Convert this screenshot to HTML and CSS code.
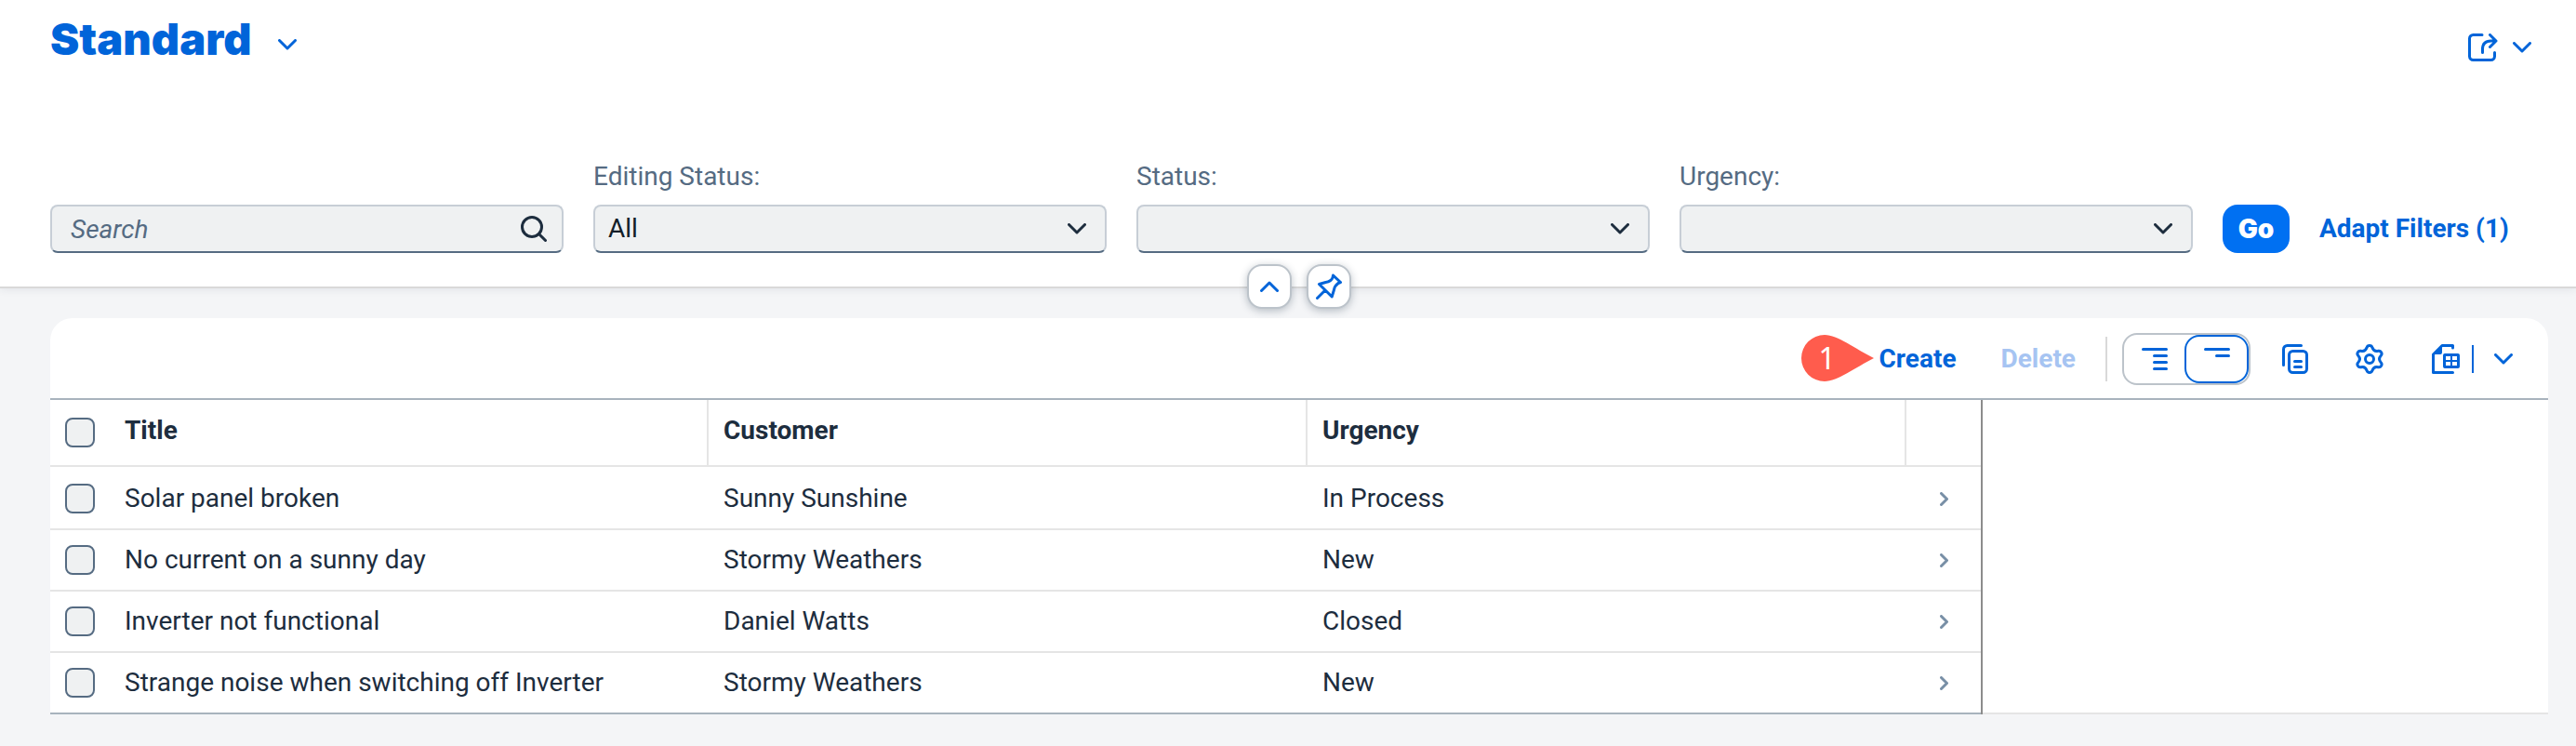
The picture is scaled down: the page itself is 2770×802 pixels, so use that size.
FILE: index.html
```html
<!DOCTYPE html>
<html lang="en">
<head>
<meta charset="utf-8">
<title>Incidents</title>
<link rel="stylesheet" href="styles.css">
</head>
<body>
<svg class="sprite" aria-hidden="true">
  <symbol id="chevron-down" viewBox="0 0 20 12"><path d="M1.5 1.5 10 10l8.500-8.500"/></symbol>
  <symbol id="chevron-up" viewBox="0 0 20 12"><path d="M1.500 10.500 10 2l8.500 8.500"/></symbol>
  <symbol id="chevron-right" viewBox="0 0 9 15"><path d="M1.500 1.500 7.500 7.500l-6 6"/></symbol>
</svg>

<header class="page-header">
  <div class="title-bar">
    <button class="variant" type="button">
      <h1 class="variant-title">Standard</h1>
      <svg class="icon chevron" aria-hidden="true"><use href="#chevron-down"/></svg>
    </button>
    <button class="share" type="button" aria-label="Share">
      <svg class="icon share-icon" viewBox="0 0 32 30" aria-hidden="true"><path d="M15 1.500H5.500a4 4 0 0 0-4 4v19a4 4 0 0 0 4 4h19a4 4 0 0 0 4-4v-4M15.500 20.500V17q0-9 9-9H30M23.500 1.500 30 8l-6.500 6.500"/></svg>
      <svg class="icon chevron" aria-hidden="true"><use href="#chevron-down"/></svg>
    </button>
  </div>

  <form class="filter-bar">
    <div class="field">
      <div class="control">
        <input class="input search" type="text" placeholder="Search" aria-label="Search">
        <svg class="icon control-icon search-icon" viewBox="0 0 28 28" aria-hidden="true"><circle cx="12" cy="12" r="10.500"/><path d="m19.500 19.500 7 7"/></svg>
      </div>
    </div>
    <div class="field">
      <label class="label" for="editing">Editing Status:</label>
      <div class="control">
        <select class="input" id="editing"><option>All</option></select>
        <svg class="icon control-icon chevron" aria-hidden="true"><use href="#chevron-down"/></svg>
      </div>
    </div>
    <div class="field">
      <label class="label" for="status">Status:</label>
      <div class="control">
        <select class="input" id="status"><option></option></select>
        <svg class="icon control-icon chevron" aria-hidden="true"><use href="#chevron-down"/></svg>
      </div>
    </div>
    <div class="field">
      <label class="label" for="urgency">Urgency:</label>
      <div class="control">
        <select class="input" id="urgency"><option></option></select>
        <svg class="icon control-icon chevron" aria-hidden="true"><use href="#chevron-down"/></svg>
      </div>
    </div>
    <div class="filter-actions">
      <button class="go" type="button">Go</button>
      <button class="text-button" type="button">Adapt Filters (1)</button>
    </div>
  </form>

  <div class="header-handles">
    <button class="handle" type="button" aria-label="Collapse header">
      <svg class="icon chevron" aria-hidden="true"><use href="#chevron-up"/></svg>
    </button>
    <button class="handle" type="button" aria-label="Pin header">
      <svg class="icon pin-icon" viewBox="0 0 28 28" aria-hidden="true"><path d="m18.500 2 8 7.500-2.500 1q-4 3-4.500 7L17.200 25 3.500 11.500l7-2q6-1 7.500-5ZM10 18l-8.500 8.500"/></svg>
    </button>
  </div>
</header>

<main class="content">
  <section class="card">
    <div class="toolbar">
      <div class="create-wrap">
        <button class="text-button action" type="button">Create</button>
        <div class="callout">
          <svg class="callout-shape" viewBox="0 0 78 50" aria-hidden="true"><path d="M25 0C39 0 58 15 78 25 58 35 39 50 25 50A25 25 0 0 1 25 0Z"/></svg>
          <span class="callout-number">1</span>
        </div>
      </div>
      <button class="text-button action" type="button" disabled>Delete</button>
      <span class="separator"></span>
      <div class="segments">
        <button class="segment" type="button" aria-label="Show more per row">
          <svg class="icon list-icon" viewBox="0 0 28 24" aria-hidden="true"><path d="M1.500 1.500h25M13.500 8.500h13M13.500 15.500h13M13.500 22.500h13"/></svg>
        </button>
        <button class="segment selected" type="button" aria-label="Show less per row">
          <svg class="icon list-icon" viewBox="0 0 28 24" aria-hidden="true"><path d="M1.500 1.500h25M13.500 8.500h13"/></svg>
        </button>
      </div>
      <button class="icon-button" type="button" aria-label="Copy">
        <svg class="icon copy-icon" viewBox="0 0 28 32" aria-hidden="true"><path d="M1.500 22.500V5.500a4 4 0 0 1 4-4h15M13.500 18.500h7M13.500 24.500h7"/><rect x="7.500" y="7.500" width="19" height="23" rx="4"/></svg>
      </button>
      <button class="icon-button" type="button" aria-label="Settings">
        <svg class="icon file-icon" viewBox="-15 -16 30 32" aria-hidden="true"><circle r="4.500"/><path d="M-3-12.200Q-2.400-14.500 0-14.500 2.400-14.500 3-12.200 4.500-7.800 9.100-8.700 11.400-9.300 12.600-7.200 13.800-5.200 12.100-3.500 9 0 12.100 3.500 13.800 5.200 12.600 7.200 11.400 9.300 9.100 8.700 4.500 7.800 3 12.200 2.400 14.500 0 14.500-2.400 14.500-3 12.200-4.500 7.800-9.100 8.700-11.400 9.300-12.600 7.200-13.800 5.200-12.100 3.500-9 0-12.100-3.500-13.800-5.200-12.600-7.200-11.400-9.300-9.100-8.700-4.500-7.800-3-12.200Z"/></svg>
      </button>
      <div class="split">
        <button class="icon-button export" type="button" aria-label="Export">
          <svg class="icon file-icon" viewBox="0 0 30 32" aria-hidden="true"><path d="M22.500 4V1.500H11L1.500 11v19.500h21"/><path class="solid" d="M11 1v8q0 2-2 2H1ZM14 10h14q2 0 2 2v12q0 2-2 2H14q-2 0-2-2V12q0-2 2-2Z"/><path class="cell" d="M15 13h5v4h-5zM22 13h5v4h-5zM15 19h5v4h-5zM22 19h5v4h-5z"/></svg>
        </button>
        <span class="split-line"></span>
        <button class="icon-button" type="button" aria-label="Export options">
          <svg class="icon chevron" aria-hidden="true"><use href="#chevron-down"/></svg>
        </button>
      </div>
    </div>

    <div class="table-area">
      <table class="table">
        <colgroup><col class="col-check"><col class="col-data"><col class="col-data"><col class="col-data"><col class="col-nav"></colgroup>
        <thead>
          <tr>
            <th class="check-cell"><input class="checkbox" type="checkbox" aria-label="Select all"></th>
            <th class="ruled">Title</th><th class="ruled">Customer</th><th class="ruled">Urgency</th><th class="nav-cell"></th>
          </tr>
        </thead>
        <tbody>
          <tr>
            <td class="check-cell"><input class="checkbox" type="checkbox" aria-label="Select Solar panel broken"></td>
            <td>Solar panel broken</td><td>Sunny Sunshine</td><td>In Process</td>
            <td class="nav-cell"><svg class="icon nav-icon" aria-hidden="true"><use href="#chevron-right"/></svg></td>
          </tr>
          <tr>
            <td class="check-cell"><input class="checkbox" type="checkbox" aria-label="Select No current on a sunny day"></td>
            <td>No current on a sunny day</td><td>Stormy Weathers</td><td>New</td>
            <td class="nav-cell"><svg class="icon nav-icon" aria-hidden="true"><use href="#chevron-right"/></svg></td>
          </tr>
          <tr>
            <td class="check-cell"><input class="checkbox" type="checkbox" aria-label="Select Inverter not functional"></td>
            <td>Inverter not functional</td><td>Daniel Watts</td><td>Closed</td>
            <td class="nav-cell"><svg class="icon nav-icon" aria-hidden="true"><use href="#chevron-right"/></svg></td>
          </tr>
          <tr>
            <td class="check-cell"><input class="checkbox" type="checkbox" aria-label="Select Strange noise when switching off Inverter"></td>
            <td>Strange noise when switching off Inverter</td><td>Stormy Weathers</td><td>New</td>
            <td class="nav-cell"><svg class="icon nav-icon" aria-hidden="true"><use href="#chevron-right"/></svg></td>
          </tr>
        </tbody>
      </table>
      <div class="table-rest"></div>
    </div>
  </section>
</main>
</body>
</html>
```

FILE: styles.css
```css
* { box-sizing: border-box; }

body {
  margin: 0;
  min-height: 100vh;
  background: #f4f5f7;
  color: #1d2d3e;
  font-family: Roboto, "Open Sans", sans-serif;
  font-size: 28px;
  line-height: 32px;
}

button, input, select { font: inherit; color: inherit; }

button {
  display: flex;
  align-items: center;
  justify-content: center;
  margin: 0;
  padding: 0;
  border: 0;
  background: none;
  color: #0064d9;
}

.sprite { display: none; }

.icon {
  display: block;
  flex: none;
  fill: none;
  stroke: currentColor;
  stroke-width: 3;
  stroke-linecap: round;
  stroke-linejoin: round;
}

.chevron { width: 20px; height: 12px; }
.share-icon { width: 32px; height: 30px; }
.pin-icon { width: 28px; height: 28px; }
.list-icon { width: 28px; height: 24px; }
.copy-icon { width: 28px; height: 32px; }
.file-icon { width: 30px; height: 32px; }
.nav-icon { width: 9px; height: 15px; color: #788fa6; }
.solid { fill: currentColor; stroke: none; }
.cell { fill: #fff; stroke: none; }

/* Page header */
.page-header {
  position: relative;
  padding: 14px 54px 36px;
  border-bottom: 2px solid #d9d9d9;
  background: #fff;
  box-shadow: 0 2px 8px rgba(34, 53, 72, 0.08);
}

.title-bar {
  display: flex;
  align-items: center;
  justify-content: space-between;
  height: 56px;
}

.variant { gap: 28px; }
.variant .chevron { margin-top: 12px; }

.variant-title {
  margin: 0;
  font-family: Inter, Roboto, sans-serif;
  font-size: 47px;
  font-weight: 900;
  line-height: 56px;
}

.share {
  gap: 16px;
  margin-right: -6px;
  padding-top: 18px;
}

.filter-bar {
  display: flex;
  align-items: flex-end;
  gap: 32px;
  margin-top: 104px;
}

.field { flex: 1; min-width: 0; }

.label {
  display: block;
  margin-bottom: 14px;
  color: #556b82;
}

.control { position: relative; }

.input {
  display: block;
  width: 100%;
  height: 52px;
  margin: 0;
  padding: 0 60px 0 14px;
  border: 2px solid #c7ced6;
  border-bottom-color: #556b82;
  border-radius: 8px;
  background: #eff1f2;
  color: #131e29;
  appearance: none;
}

.search { padding-left: 20px; }
.search::placeholder { color: #556b82; font-style: italic; opacity: 1; }

.control-icon {
  position: absolute;
  top: 0;
  right: 22px;
  bottom: 0;
  margin: auto 0;
  color: #1d2d3e;
}

.search-icon { right: 18px; width: 28px; height: 28px; }

.filter-actions {
  display: flex;
  gap: 32px;
  width: 326px;
}

.go {
  width: 72px;
  height: 52px;
  border-radius: 16px;
  background: #0070f2;
  color: #fff;
  font-family: Inter, Roboto, sans-serif;
  font-weight: 900;
}

.text-button { font-weight: 700; }
.text-button:disabled { color: #a6c4f2; }

.header-handles {
  position: absolute;
  right: 0;
  bottom: -24px;
  left: 24px;
  display: flex;
  justify-content: center;
  gap: 16px;
}

.handle {
  width: 48px;
  height: 48px;
  border: 2px solid #bcc3ca;
  border-radius: 16px;
  background: #fff;
  box-shadow: 0 2px 8px rgba(34, 53, 72, 0.3);
}

/* Table card */
.content { padding: 32px 30px 34px 54px; }

.card {
  border-radius: 24px 24px 0 0;
  background: #fff;
}

.toolbar {
  display: flex;
  align-items: center;
  justify-content: flex-end;
  gap: 16px;
  height: 88px;
  padding: 2px 16px 0 0;
  border-bottom: 2px solid #a8b3bd;
}

.action { height: 52px; padding: 0 16px; }
.create-wrap { position: relative; }

.callout {
  position: absolute;
  top: 0;
  left: -68px;
  width: 78px;
  height: 50px;
  color: #fff;
}

.callout-shape { display: block; width: 78px; height: 50px; fill: #ff5c4d; }

.callout-number {
  position: absolute;
  top: 0;
  left: 0;
  width: 56px;
  font-family: "Noto Sans", sans-serif;
  font-size: 32px;
  line-height: 50px;
  text-align: center;
}

.separator { width: 2px; height: 48px; background: #d9d9d9; }

.segments {
  display: flex;
  width: 138px;
  height: 56px;
  border: 2px solid #bcc3ca;
  border-radius: 16px;
}

.segment { flex: 1; border-radius: 16px; }
.selected { border: 2px solid #0064d9; }

.icon-button { width: 64px; height: 52px; }

.split { display: flex; align-items: center; }
.export { width: 62px; padding-left: 6px; }
.split-line { width: 2px; height: 30px; background: #0064d9; }

.table-area { display: flex; }
.table-rest { flex: 1; border-bottom: 2px solid #e5e5e5; }

.table {
  width: 2078px;
  border-right: 2px solid #8c8c8c;
  border-spacing: 0;
  table-layout: fixed;
}

.col-check { width: 64px; }
.col-data { width: 644px; }

.table th, .table td {
  height: 66px;
  padding: 0 16px;
  border-bottom: 2px solid #e5e5e5;
  text-align: left;
  vertical-align: middle;
}

.table th { height: 72px; padding-bottom: 4px; font-weight: 700; }
.table th.check-cell { padding-bottom: 0; }
.table .ruled { border-right: 2px solid #e5e5e5; }
.table tbody tr:first-child td { height: 68px; padding-top: 2px; }
.table tbody tr:last-child td { border-bottom-color: #a8b3bd; }
.table .nav-cell { padding: 0 0 0 36px; }

.checkbox {
  display: block;
  width: 32px;
  height: 32px;
  margin: 0;
  border: 2px solid #556b82;
  border-radius: 8px;
  background: #eff1f2;
  appearance: none;
}
```
